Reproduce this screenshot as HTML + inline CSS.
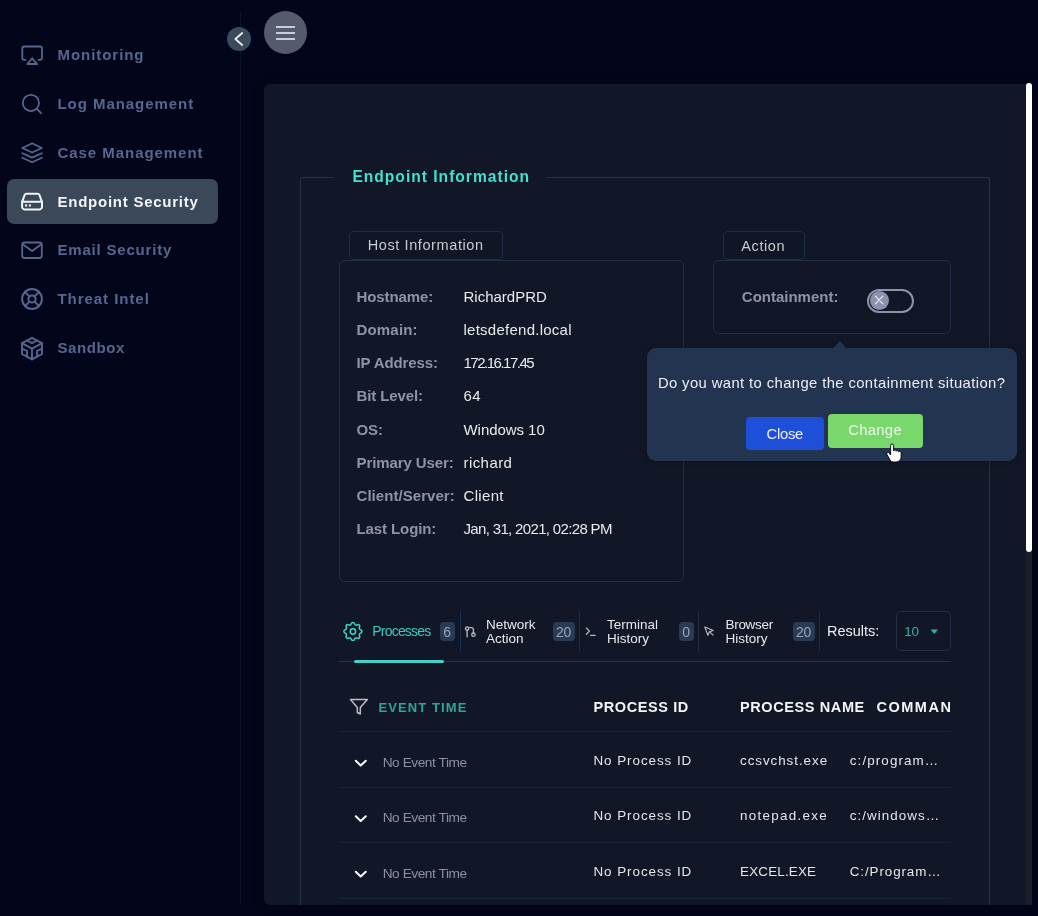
<!DOCTYPE html>
<html><head><meta charset="utf-8">
<style>
html,body{margin:0;padding:0;}
body{width:1038px;height:916px;overflow:hidden;background:#03061a;position:relative;font-family:"Liberation Sans",sans-serif;}
.a{position:absolute;box-sizing:border-box;}
.t{position:absolute;white-space:nowrap;}
#tx{position:absolute;left:0;top:0;width:1038px;height:916px;will-change:transform;}
svg{position:absolute;overflow:visible;}
</style></head><body>
<!-- sidebar divider -->
<div class="a" style="left:240px;top:12px;width:1px;height:893px;background:#0e1329"></div>
<!-- active item -->
<div class="a" style="left:7px;top:179px;width:211px;height:45px;border-radius:7px;background:#3a4859"></div>
<!-- collapse button -->
<div class="a" style="left:227px;top:27px;width:24px;height:24px;border-radius:50%;background:#3a4c5b"></div>
<svg style="left:0;top:0" width="1038" height="916">
  <path d="M242.2 33 L235.4 39 L242.2 45" fill="none" stroke="#eef0f4" stroke-width="1.7" stroke-linecap="round" stroke-linejoin="round"/>
</svg>
<!-- hamburger -->
<div class="a" style="left:264px;top:11px;width:43px;height:43px;border-radius:50%;background:#555a6d"></div>
<div class="a" style="left:276px;top:26px;width:19px;height:2px;background:#c9ccdc"></div>
<div class="a" style="left:276px;top:32px;width:19px;height:2px;background:#c9ccdc"></div>
<div class="a" style="left:276px;top:38px;width:19px;height:2px;background:#c9ccdc"></div>
<!-- panel -->
<div class="a" style="left:264px;top:84px;width:768px;height:821px;border-radius:6px 0 0 6px;background:#111726;box-shadow:0 0 10px 2px rgba(0,0,0,0.35)"></div>
<!-- scrollbar -->
<div class="a" style="left:1026px;top:84px;width:6px;height:821px;background:#1c1f2b"></div>
<div class="a" style="left:1026px;top:83px;width:6px;height:469px;border-radius:3px;background:#ffffff"></div>
<!-- fieldset border -->
<div class="a" style="left:300px;top:177px;width:690px;height:728px;border:1px solid #263349;border-bottom:none;border-radius:3px 3px 0 0"></div>
<div class="a" style="left:334px;top:170px;width:212px;height:14px;background:#111726"></div>
<!-- host info label box -->
<div class="a" style="left:349px;top:231px;width:154px;height:29px;border:1px solid #213048;border-radius:5px;background:#0f1626"></div>
<!-- host card -->
<div class="a" style="left:339px;top:260px;width:345px;height:322px;border:1px solid #213048;border-radius:6px"></div>
<!-- action label box -->
<div class="a" style="left:722.5px;top:231px;width:82px;height:28.5px;border:1px solid #213048;border-radius:5px;background:#0f1626"></div>
<!-- action card -->
<div class="a" style="left:713px;top:260px;width:238px;height:74px;border:1px solid #213048;border-radius:6px"></div>
<!-- toggle -->
<div class="a" style="left:867px;top:289px;width:47px;height:24px;border:2px solid #8e93aa;border-radius:12px"></div>
<div class="a" style="left:869.5px;top:291px;width:19px;height:19px;border-radius:50%;background:#8c91ac"></div>
<svg style="left:0;top:0" width="1038" height="916">
  <path d="M875.4 296.2 L882.8 303.8 M882.8 296.2 L875.4 303.8" stroke="#f0f0f6" stroke-width="1.2" stroke-linecap="round"/>
</svg>
<!-- popup -->
<div class="a" style="left:646.5px;top:348px;width:370.5px;height:112.5px;border-radius:9px;background:#233450;box-shadow:0 0 6px rgba(0,0,0,0.25)"></div>
<svg style="left:0;top:0" width="1038" height="916">
  <path d="M833 348.5 L839.8 341 L846.6 348.5 Z" fill="#233450"/>
</svg>
<div class="a" style="left:746px;top:417px;width:78px;height:33px;border-radius:4px;background:#1e4fd8"></div>
<div class="a" style="left:828px;top:414px;width:95px;height:33.5px;border-radius:4px;background:#78d86b"></div>
<!-- tabs -->
<div class="a" style="left:460px;top:611px;width:1px;height:40px;background:#1b3050"></div>
<div class="a" style="left:579px;top:611px;width:1px;height:40px;background:#242b3b"></div>
<div class="a" style="left:698px;top:611px;width:1px;height:40px;background:#242b3b"></div>
<div class="a" style="left:819px;top:611px;width:1px;height:40px;background:#222b3e"></div>
<div class="a" style="left:440px;top:622px;width:15px;height:18.5px;border-radius:4px;background:#2a3a54"></div>
<div class="a" style="left:553px;top:622px;width:22px;height:18.5px;border-radius:4px;background:#2a3a54"></div>
<div class="a" style="left:679px;top:622px;width:15px;height:18.5px;border-radius:4px;background:#2a3a54"></div>
<div class="a" style="left:793px;top:622px;width:22px;height:18.5px;border-radius:4px;background:#2a3a54"></div>
<div class="a" style="left:896px;top:611px;width:55px;height:40px;border:1px solid #213048;border-radius:5px"></div>
<svg style="left:0;top:0" width="1038" height="916">
  <path d="M930.5 629.5 L938 629.5 L934.25 634 Z" fill="#2fb3a3"/>
</svg>
<div class="a" style="left:339px;top:661px;width:612px;height:1px;background:#1f3352"></div>
<div class="a" style="left:354px;top:660px;width:90px;height:3px;border-radius:1.5px;background:#40d2c6"></div>
<!-- table lines -->
<div class="a" style="left:339px;top:731px;width:612px;height:1px;background:#1a2336"></div>
<div class="a" style="left:339px;top:786.5px;width:612px;height:1px;background:#1a2336"></div>
<div class="a" style="left:339px;top:842px;width:612px;height:1px;background:#1a2336"></div>
<div class="a" style="left:339px;top:897.5px;width:612px;height:1px;background:#1a2336"></div>

<svg style="left:0;top:0" width="1038" height="916" fill="none" stroke-linecap="round" stroke-linejoin="round">
 <g stroke="#55678f" stroke-width="1.8">
  <path d="M25.5 59.8 H24.3 a2 2 0 0 1 -2 -2 V48.5 a2 2 0 0 1 2 -2 H40 a2 2 0 0 1 2 2 V57.8 a2 2 0 0 1 -2 2 H38.6"/>
  <path d="M32.2 58.3 L37.1 64 H27.3 Z"/>
  <circle cx="30.9" cy="102.95" r="8.1"/>
  <path d="M36.8 108.8 L41 113.1"/>
  <path d="M32.1 143.3 L41.8 148 L32.1 152.5 L22.3 148 Z"/>
  <path d="M22.3 153.2 L32.1 157.6 L41.8 153.2"/>
  <path d="M22.3 157.8 L32.1 162.3 L41.8 157.8"/>
  <rect x="22.2" y="242.5" width="19.6" height="15.5" rx="2.5"/>
  <path d="M22.6 244.2 L32.1 251 L41.4 244.2"/>
  <circle cx="32" cy="299" r="9.9" stroke-width="2"/>
  <circle cx="32" cy="299" r="3.6" stroke-width="2"/>
  <path stroke-width="2" d="M34.6 301.6 L38.9 305.9 M29.4 301.6 L25.1 305.9 M29.4 296.4 L25.1 292.1 M34.6 296.4 L38.9 292.1"/>
 </g>
 <g stroke="#55678f" stroke-width="1.9" transform="translate(22,337.8) scale(1.25,1.2) translate(-4,-3)">
  <path vector-effect="non-scaling-stroke" d="M20 7.5v9l-4 2.25l-4 2.25l-4 -2.25l-4 -2.25v-9l4 -2.25l4 -2.25l4 2.25z"/>
  <path vector-effect="non-scaling-stroke" d="M12 12l4 -2.25l4 -2.25"/>
  <path vector-effect="non-scaling-stroke" d="M12 12l0 9"/>
  <path vector-effect="non-scaling-stroke" d="M12 12l-4 -2.25l-4 -2.25"/>
  <path vector-effect="non-scaling-stroke" d="M20 12l-4 2v4.75"/>
  <path vector-effect="non-scaling-stroke" d="M4 12l4 2l0 4.75"/>
  <path vector-effect="non-scaling-stroke" d="M8 5.25l4 2.25l4 -2.25"/>
 </g>
 <g stroke="#f2f4f8" stroke-width="2">
  <path d="M26.5 193.7 H37.6 a2 2 0 0 1 1.8 1.2 L42 201.8 H22.1 L24.7 194.9 a2 2 0 0 1 1.8 -1.2 Z"/>
  <path d="M22.1 201.8 V206.9 a2.5 2.5 0 0 0 2.5 2.5 H39.5 a2.5 2.5 0 0 0 2.5 -2.5 V201.8"/>
 </g>
 <g fill="#f2f4f8"><rect x="25" y="204.4" width="2.1" height="2.1"/><rect x="28.8" y="204.4" width="2.1" height="2.1"/></g>
 <path stroke="#3dd5c7" stroke-width="1.5" transform="translate(340.9,619.5) scale(1.0)" d="M10.325 4.317c.426 -1.756 2.924 -1.756 3.35 0a1.724 1.724 0 0 0 2.573 1.066c1.543 -.94 3.31 .826 2.37 2.37a1.724 1.724 0 0 0 1.065 2.572c1.756 .426 1.756 2.924 0 3.35a1.724 1.724 0 0 0 -1.066 2.573c.94 1.543 -.826 3.31 -2.37 2.37a1.724 1.724 0 0 0 -2.572 1.065c-.426 1.756 -2.924 1.756 -3.35 0a1.724 1.724 0 0 0 -2.573 -1.066c-1.543 .94 -3.31 -.826 -2.37 -2.37a1.724 1.724 0 0 0 -1.065 -2.572c-1.756 -.426 -1.756 -2.924 0 -3.35a1.724 1.724 0 0 0 1.066 -2.573c-.94 -1.543 .826 -3.31 2.37 -2.37c1 .608 2.296 .07 2.572 -1.065z"/>
 <circle cx="352.9" cy="631.5" r="2.7" stroke="#3dd5c7" stroke-width="1.5"/>
 <g stroke="#b9bdc9" stroke-width="1.3">
  <circle cx="467.1" cy="628.5" r="1.7"/>
  <path d="M467.1 630.2 V636.8"/>
  <circle cx="473.4" cy="634.7" r="1.7"/>
  <path d="M469.8 627.6 H471.4 a2 2 0 0 1 2 2 V633"/>
  <path d="M586.4 627.9 L589.4 631.1 L586.4 634.4"/>
  <path d="M590.6 635.3 H595.2"/>
  <path stroke-width="1.1" d="M704.8 627 L713.2 630.4 L709.4 631.8 L707.9 635.3 Z"/>
  <path stroke-width="1.1" d="M709.6 631.9 L713.1 635.2"/>
 </g>
 <path stroke="#b9bdc9" stroke-width="1.5" d="M350.5 699.5 H367.3 L360.3 707.5 V714 L357.3 712.5 V707.5 Z"/>
 <g stroke="#f4f5f8" stroke-width="2.1">
  <path d="M355.8 760.8 L360.7 765.6 L365.8 760.8"/>
  <path d="M355.8 816.3 L360.7 821.1 L365.8 816.3"/>
  <path d="M355.8 871.8 L360.7 876.6 L365.8 871.8"/>
 </g>
</svg>
<!-- hand cursor -->
<svg style="left:0;top:0" width="1038" height="916">
 <path d="M890.6 445.5 a1.5 1.5 0 0 1 3 0 V451 a1.3 1.3 0 0 1 2.6 0.3 a1.3 1.3 0 0 1 2.5 0.6 a1.3 1.3 0 0 1 2.4 0.8 V457 a5 5 0 0 1 -5 5 H893.5 a4 4 0 0 1 -3.4 -1.9 L887 454.5 a1.3 1.3 0 0 1 2.2 -1.4 L890.6 455 Z" fill="#ffffff" stroke="#000000" stroke-width="0.9"/>
</svg>
<!-- badge texts -->
<div id="tx">
<div class="t" style="left:57.50px;top:47.00px;font-size:15px;line-height:15px;color:#56678f;font-weight:bold;letter-spacing:0.95px;">Monitoring</div>
<div class="t" style="left:57.50px;top:96.20px;font-size:15px;line-height:15px;color:#56678f;font-weight:bold;letter-spacing:0.95px;">Log Management</div>
<div class="t" style="left:57.50px;top:144.90px;font-size:15px;line-height:15px;color:#56678f;font-weight:bold;letter-spacing:0.95px;">Case Management</div>
<div class="t" style="left:57.50px;top:194.30px;font-size:15px;line-height:15px;color:#f2f4f8;font-weight:bold;letter-spacing:0.75px;">Endpoint Security</div>
<div class="t" style="left:57.50px;top:242.30px;font-size:15px;line-height:15px;color:#56678f;font-weight:bold;letter-spacing:0.8px;">Email Security</div>
<div class="t" style="left:57.50px;top:291.00px;font-size:15px;line-height:15px;color:#56678f;font-weight:bold;letter-spacing:0.95px;">Threat Intel</div>
<div class="t" style="left:57.50px;top:340.40px;font-size:15px;line-height:15px;color:#56678f;font-weight:bold;letter-spacing:0.6px;">Sandbox</div>
<div class="t" style="left:352.40px;top:169.09px;font-size:15.6px;line-height:15.6px;color:#3fe2d3;font-weight:bold;letter-spacing:1.0px;">Endpoint Information</div>
<div class="t" style="left:367.70px;top:238.23px;font-size:14.5px;line-height:14.5px;color:#c9cbd0;font-weight:normal;letter-spacing:0.6px;">Host Information</div>
<div class="t" style="left:741.30px;top:238.53px;font-size:14.5px;line-height:14.5px;color:#c9cbd0;font-weight:normal;letter-spacing:0.6px;">Action</div>
<div class="t" style="left:356.50px;top:289.00px;font-size:15px;line-height:15px;color:#8c95a6;font-weight:bold;letter-spacing:-0.1px;">Hostname:</div>
<div class="t" style="left:463.50px;top:289.00px;font-size:15px;line-height:15px;color:#e8eaee;font-weight:normal;letter-spacing:0px;">RichardPRD</div>
<div class="t" style="left:356.50px;top:322.15px;font-size:15px;line-height:15px;color:#8c95a6;font-weight:bold;letter-spacing:0.18px;">Domain:</div>
<div class="t" style="left:463.50px;top:322.15px;font-size:15px;line-height:15px;color:#e8eaee;font-weight:normal;letter-spacing:0.25px;">letsdefend.local</div>
<div class="t" style="left:356.50px;top:355.30px;font-size:15px;line-height:15px;color:#8c95a6;font-weight:bold;letter-spacing:-0.1px;">IP Address:</div>
<div class="t" style="left:463.50px;top:355.30px;font-size:15px;line-height:15px;color:#e8eaee;font-weight:normal;letter-spacing:-1.5px;">172.16.17.45</div>
<div class="t" style="left:356.50px;top:388.45px;font-size:15px;line-height:15px;color:#8c95a6;font-weight:bold;letter-spacing:-0.1px;">Bit Level:</div>
<div class="t" style="left:463.50px;top:388.45px;font-size:15px;line-height:15px;color:#e8eaee;font-weight:normal;letter-spacing:0.3px;">64</div>
<div class="t" style="left:356.50px;top:421.60px;font-size:15px;line-height:15px;color:#8c95a6;font-weight:bold;letter-spacing:-0.1px;">OS:</div>
<div class="t" style="left:463.50px;top:421.60px;font-size:15px;line-height:15px;color:#e8eaee;font-weight:normal;letter-spacing:-0.05px;">Windows 10</div>
<div class="t" style="left:356.50px;top:454.75px;font-size:15px;line-height:15px;color:#8c95a6;font-weight:bold;letter-spacing:-0.1px;">Primary User:</div>
<div class="t" style="left:463.50px;top:454.75px;font-size:15px;line-height:15px;color:#e8eaee;font-weight:normal;letter-spacing:0.43px;">richard</div>
<div class="t" style="left:356.50px;top:487.90px;font-size:15px;line-height:15px;color:#8c95a6;font-weight:bold;letter-spacing:0.05px;">Client/Server:</div>
<div class="t" style="left:463.50px;top:487.90px;font-size:15px;line-height:15px;color:#e8eaee;font-weight:normal;letter-spacing:0.33px;">Client</div>
<div class="t" style="left:356.50px;top:521.05px;font-size:15px;line-height:15px;color:#8c95a6;font-weight:bold;letter-spacing:-0.1px;">Last Login:</div>
<div class="t" style="left:463.50px;top:521.05px;font-size:15px;line-height:15px;color:#e8eaee;font-weight:normal;letter-spacing:-0.66px;">Jan, 31, 2021, 02:28 PM</div>
<div class="t" style="left:741.80px;top:289.00px;font-size:15px;line-height:15px;color:#8c95a6;font-weight:bold;letter-spacing:0px;">Containment:</div>
<div class="t" style="left:657.90px;top:376.47px;font-size:14.8px;line-height:14.8px;color:#eceef2;font-weight:normal;letter-spacing:0.4px;">Do you want to change the containment situation?</div>
<div class="t" style="left:766.60px;top:427.17px;font-size:14.8px;line-height:14.8px;color:#eef0f6;font-weight:normal;letter-spacing:-0.3px;">Close</div>
<div class="t" style="left:848.30px;top:422.97px;font-size:14.8px;line-height:14.8px;color:#eef6ea;font-weight:normal;letter-spacing:0.3px;">Change</div>
<div class="t" style="left:372.30px;top:624.25px;font-size:14px;line-height:14px;color:#3cc9c0;font-weight:normal;letter-spacing:-0.8px;">Processes</div>
<div class="t" style="left:486.00px;top:618.07px;font-size:13.5px;line-height:13.5px;color:#e6e8ec;font-weight:normal;letter-spacing:0px;">Network</div>
<div class="t" style="left:486.00px;top:631.97px;font-size:13.5px;line-height:13.5px;color:#e6e8ec;font-weight:normal;letter-spacing:0px;">Action</div>
<div class="t" style="left:607.00px;top:618.07px;font-size:13.5px;line-height:13.5px;color:#e6e8ec;font-weight:normal;letter-spacing:0px;">Terminal</div>
<div class="t" style="left:607.00px;top:631.97px;font-size:13.5px;line-height:13.5px;color:#e6e8ec;font-weight:normal;letter-spacing:0px;">History</div>
<div class="t" style="left:725.50px;top:618.07px;font-size:13.5px;line-height:13.5px;color:#e6e8ec;font-weight:normal;letter-spacing:-0.3px;">Browser</div>
<div class="t" style="left:725.50px;top:631.97px;font-size:13.5px;line-height:13.5px;color:#e6e8ec;font-weight:normal;letter-spacing:0px;">History</div>
<div class="t" style="left:827.00px;top:624.33px;font-size:14.5px;line-height:14.5px;color:#eceef2;font-weight:normal;letter-spacing:0px;">Results:</div>
<div class="t" style="left:904.30px;top:625.27px;font-size:13.5px;line-height:13.5px;color:#2fb3a3;font-weight:normal;letter-spacing:-0.3px;">10</div>
<div class="t" style="left:443.20px;top:624.65px;font-size:14px;line-height:14px;color:#9ca3b4;font-weight:normal;letter-spacing:0px;">6</div>
<div class="t" style="left:556.00px;top:624.65px;font-size:14px;line-height:14px;color:#9ca3b4;font-weight:normal;letter-spacing:-0.3px;">20</div>
<div class="t" style="left:682.30px;top:624.65px;font-size:14px;line-height:14px;color:#9ca3b4;font-weight:normal;letter-spacing:0px;">0</div>
<div class="t" style="left:796.00px;top:624.65px;font-size:14px;line-height:14px;color:#9ca3b4;font-weight:normal;letter-spacing:-0.3px;">20</div>
<div class="t" style="left:378.40px;top:700.80px;font-size:13px;line-height:13px;color:#2aa898;font-weight:bold;letter-spacing:1.1px;">EVENT TIME</div>
<div class="t" style="left:593.50px;top:699.63px;font-size:14.5px;line-height:14.5px;color:#f4f5f7;font-weight:bold;letter-spacing:0.6px;">PROCESS ID</div>
<div class="t" style="left:740.00px;top:699.63px;font-size:14.5px;line-height:14.5px;color:#f4f5f7;font-weight:bold;letter-spacing:0.6px;">PROCESS NAME</div>
<div class="t" style="left:876.50px;top:699.63px;font-size:14.5px;line-height:14.5px;color:#f4f5f7;font-weight:bold;letter-spacing:1.5px;">COMMAN</div>
<div class="t" style="left:382.70px;top:755.70px;font-size:13.7px;line-height:13.7px;color:#8b91a3;font-weight:normal;letter-spacing:-0.45px;">No Event Time</div>
<div class="t" style="left:593.50px;top:753.96px;font-size:13.4px;line-height:13.4px;color:#e4e6ea;font-weight:normal;letter-spacing:0.95px;">No Process ID</div>
<div class="t" style="left:740.00px;top:753.96px;font-size:13.4px;line-height:13.4px;color:#e4e6ea;font-weight:normal;letter-spacing:0.95px;">ccsvchst.exe</div>
<div class="t" style="left:849.80px;top:753.96px;font-size:13.4px;line-height:13.4px;color:#e4e6ea;font-weight:normal;letter-spacing:1.1px;">c:/program…</div>
<div class="t" style="left:382.70px;top:811.20px;font-size:13.7px;line-height:13.7px;color:#8b91a3;font-weight:normal;letter-spacing:-0.45px;">No Event Time</div>
<div class="t" style="left:593.50px;top:809.46px;font-size:13.4px;line-height:13.4px;color:#e4e6ea;font-weight:normal;letter-spacing:0.95px;">No Process ID</div>
<div class="t" style="left:740.00px;top:809.46px;font-size:13.4px;line-height:13.4px;color:#e4e6ea;font-weight:normal;letter-spacing:1.29px;">notepad.exe</div>
<div class="t" style="left:849.80px;top:809.46px;font-size:13.4px;line-height:13.4px;color:#e4e6ea;font-weight:normal;letter-spacing:1.05px;">c:/windows…</div>
<div class="t" style="left:382.70px;top:866.70px;font-size:13.7px;line-height:13.7px;color:#8b91a3;font-weight:normal;letter-spacing:-0.45px;">No Event Time</div>
<div class="t" style="left:593.50px;top:864.96px;font-size:13.4px;line-height:13.4px;color:#e4e6ea;font-weight:normal;letter-spacing:0.95px;">No Process ID</div>
<div class="t" style="left:740.00px;top:864.96px;font-size:13.4px;line-height:13.4px;color:#e4e6ea;font-weight:normal;letter-spacing:0.2px;">EXCEL.EXE</div>
<div class="t" style="left:849.80px;top:864.96px;font-size:13.4px;line-height:13.4px;color:#e4e6ea;font-weight:normal;letter-spacing:0.9px;">C:/Program…</div>
</div>
</body></html>
